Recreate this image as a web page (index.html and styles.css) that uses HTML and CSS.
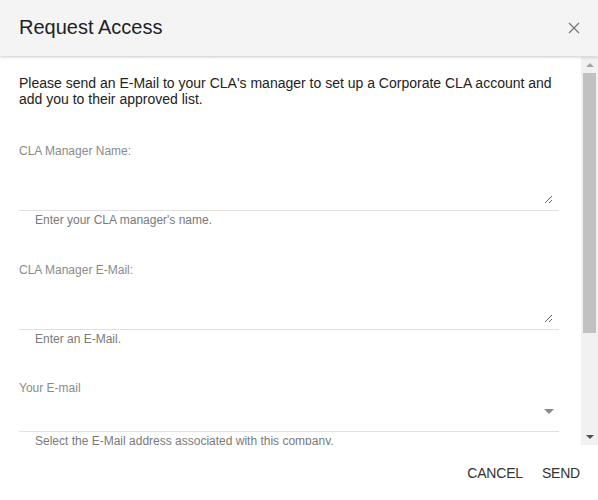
FILE: index.html
```html
<!DOCTYPE html>
<html>
<head>
<meta charset="utf-8">
<link rel="stylesheet" href="styles.css">
</head>
<body>
<div class="dialog">
  <header class="head">
    <h1 class="title">Request Access</h1>
    <svg class="close" width="12" height="12" viewBox="0 0 12 12"><path d="M1 1L11 11M11 1L1 11" stroke="#777" stroke-width="1.3" fill="none"/></svg>
  </header>
  <div class="middle">
    <main class="content">
      <p class="intro">Please send an E-Mail to your CLA's manager to set up a Corporate CLA account and add you to their approved list.</p>
      <div class="field">
        <label class="label">CLA Manager Name:</label>
        <div class="areawrap"><textarea class="area"></textarea></div>
        <div class="hint">Enter your CLA manager's name.</div>
      </div>
      <div class="field">
        <label class="label">CLA Manager E-Mail:</label>
        <div class="areawrap"><textarea class="area"></textarea></div>
        <div class="hint">Enter an E-Mail.</div>
      </div>
      <div class="field field-last">
        <label class="label">Your E-mail</label>
        <div class="select"><span class="caret"></span></div>
        <div class="hint">Select the E-Mail address associated with this company.</div>
      </div>
    </main>
    <div class="scrollbar">
      <div class="sbtn"><span class="arrow-up"></span></div>
      <div class="track"><div class="thumb"></div></div>
      <div class="sbtn"><span class="arrow-down"></span></div>
    </div>
  </div>
  <footer class="foot">
    <span class="btn">CANCEL</span>
    <span class="btn">SEND</span>
  </footer>
</div>
</body>
</html>
```
FILE: styles.css
```css
html, body { margin: 0; padding: 0; }
body { font-family: "Liberation Sans", Arial, sans-serif; background: #fff; color: #212121; }
.dialog { width: 598px; height: 500px; display: flex; flex-direction: column; overflow: hidden; }
.head { height: 56px; flex: none; background: #f4f4f4; box-shadow: 0 1px 3px rgba(0,0,0,0.22); display: flex; align-items: center; justify-content: space-between; padding: 0 18px 0 19px; box-sizing: border-box; position: relative; z-index: 1; }
.title { margin: 0; font-size: 20px; font-weight: normal; color: #222; line-height: 24px; padding-bottom: 2px; }
.close { display: block; margin-bottom: 1px; }
.middle { height: 388px; flex: none; margin-top: 1px; display: flex; }
.content { flex: 1; min-width: 0; overflow: hidden; box-sizing: border-box; padding: 18px 22px 0 19px; }
.intro { margin: 0; font-size: 14px; line-height: 16px; color: #222; }
.field { margin-top: 37px; }
.field + .field { margin-top: 36px; }
.field + .field-last { margin-top: 35px; }
.label { display: block; font-size: 12px; line-height: 14px; color: #8a8a8a; }
.areawrap { border-bottom: 1px solid #e0e0e0; padding: 0 6px 6px 0; }
.area { display: block; box-sizing: border-box; width: 100%; height: 46px; margin: 0; padding: 0; border: none; outline: none; resize: vertical; font-family: inherit; background: #fff; }
.select { height: 33px; padding: 0 5px 3px 0; border-bottom: 1px solid #e0e0e0; display: flex; align-items: center; justify-content: flex-end; }
.caret { width: 0; height: 0; border-left: 5px solid transparent; border-right: 5px solid transparent; border-top: 5px solid #8a8a8a; }
.hint { font-size: 12px; line-height: 14px; color: #7a7a7a; padding-left: 16px; margin-top: 2px; white-space: nowrap; }
.scrollbar { width: 17px; flex: none; background: #f1f1f1; display: flex; flex-direction: column; }
.sbtn { height: 16px; flex: none; display: flex; align-items: center; justify-content: center; }
.arrow-up { width: 0; height: 0; border-left: 4px solid transparent; border-right: 4px solid transparent; border-bottom: 4px solid #a3a3a3; }
.arrow-down { width: 0; height: 0; border-left: 4px solid transparent; border-right: 4px solid transparent; border-top: 4px solid #505050; }
.track { flex: 1; padding: 0 2px; }
.thumb { height: 260px; background: #c1c1c1; }
.foot { flex: 1; display: flex; justify-content: flex-end; align-items: center; gap: 19px; padding-right: 18px; }
.btn { font-size: 14px; color: #333; line-height: 16px; letter-spacing: -0.2px; }
```
